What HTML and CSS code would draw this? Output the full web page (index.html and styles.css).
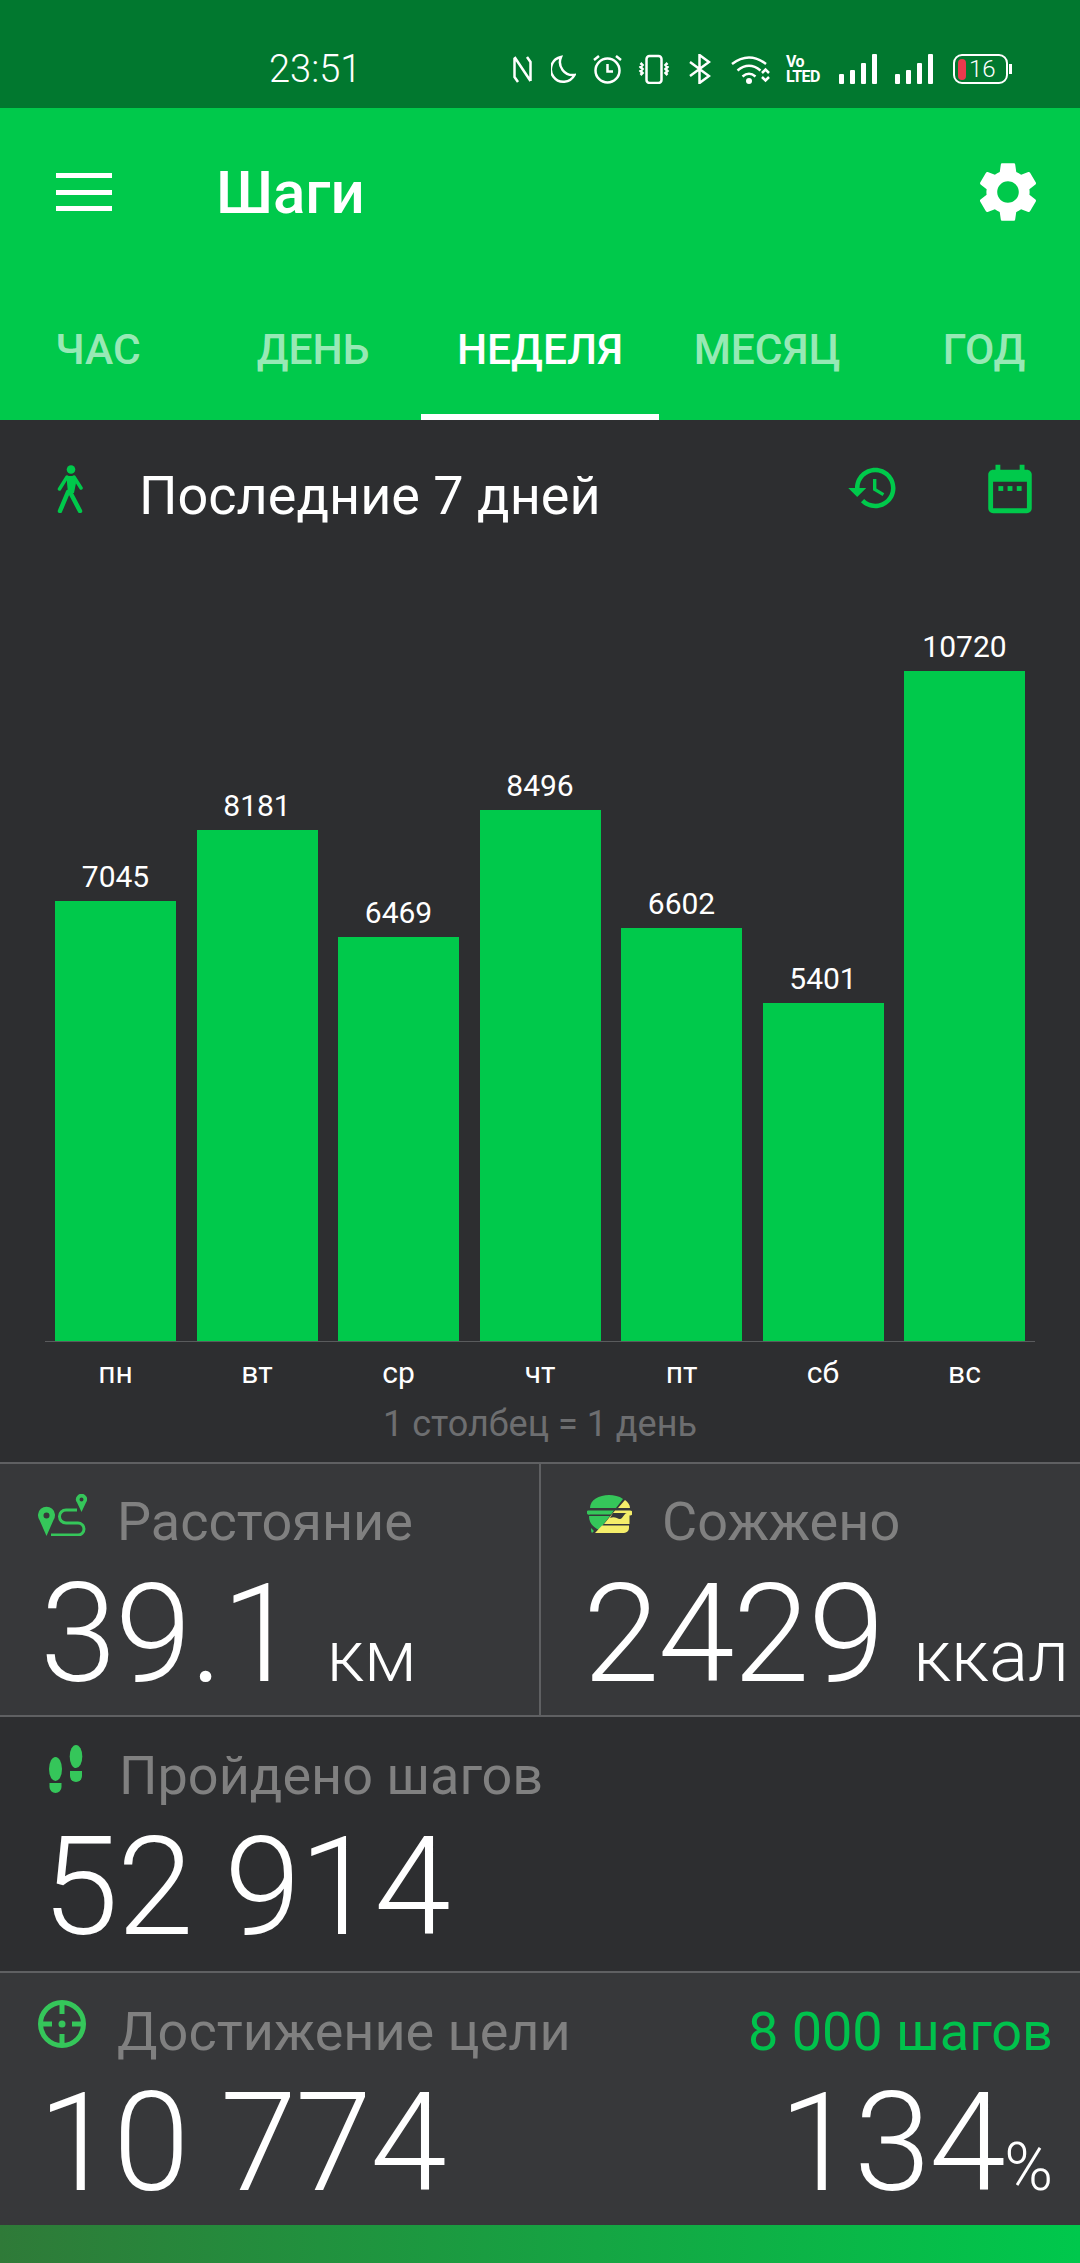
FILE: index.html
```html
<!DOCTYPE html>
<html lang="ru">
<head>
    <meta charset="UTF-8">
    <meta name="viewport" content="width=device-width, initial-scale=1.0">
    <title>Шаги</title>
    <link rel="stylesheet" href="styles.css">
</head>
<body>
    <!-- Status bar -->
    <div class="status-bar">
        <span class="clock">23:51</span>
        <div class="status-icons">
            <svg class="si" width="21" height="30" viewBox="0 0 21 30"><path d="M2.500 4v19l3.500 5M2.500 3l16 24M18.500 27V8L15 3"/></svg>
            <svg class="si si-moon" width="25" height="30" viewBox="0 0 25 30"><path d="M10 3A12.500 12.500 0 1 0 23.500 21A13 13 0 0 1 10 3Z"/></svg>
            <svg class="si si-alarm" width="31" height="30" viewBox="0 0 31 30"><circle cx="15.500" cy="16.500" r="12"/><path d="M15.500 10v7.500h5.500M2 6l5-4M29 6l-5-4"/></svg>
            <svg class="si si-vib" width="32" height="30" viewBox="0 0 32 30"><rect x="8.500" y="2" width="15" height="27" rx="3"/><path d="M2.500 9l2 2-2 2 2 2-2 2 2 2-2 2M29.500 9l-2 2 2 2-2 2 2 2-2 2 2 2"/></svg>
            <svg class="si si-bt" width="23" height="30" viewBox="0 0 23 30"><path d="M2 8l19 14-9.500 7V1L21 8 2 22"/></svg>
            <svg class="si si-wifi" width="40" height="30" viewBox="0 0 40 30"><path d="M1 10Q18-3 35 10M6.500 16.500Q18 7 29.500 16.500M11.500 22.500Q18 17 24.500 22.500M31 19l3.500-3.500 3.500 3.500M31 23l3.500 3.500 3.500-3.500"/><circle class="dot" cx="18" cy="27" r="3"/></svg>
            <div class="volte"><span>Vo</span><span>LTED</span></div>
            <svg class="signal" width="38" height="30" viewBox="0 0 38 30"><rect x="0" y="20" width="5" height="10" rx="1"/><rect x="11" y="16" width="5" height="14" rx="1"/><rect x="22" y="9" width="5" height="21" rx="1"/><rect x="33" y="0" width="5" height="30" rx="1"/></svg>
            <svg class="signal signal-second" width="38" height="30" viewBox="0 0 38 30"><rect x="0" y="20" width="5" height="10" rx="1"/><rect x="11" y="16" width="5" height="14" rx="1"/><rect x="22" y="9" width="5" height="21" rx="1"/><rect x="33" y="0" width="5" height="30" rx="1"/></svg>
            <div class="battery"><span class="battery-fill"></span><span class="battery-level">16</span></div>
        </div>
    </div>

    <!-- Green header with tabs -->
    <header>
        <div class="toolbar">
            <div class="menu-icon"><span></span><span></span><span></span></div>
            <h1>Шаги</h1>
            <svg class="gear" width="60" height="60" viewBox="2 2 20 20"><path d="M19.14 12.94c.04-.3.06-.61.06-.94 0-.32-.02-.64-.07-.94l2.03-1.58c.18-.14.23-.41.12-.61l-1.92-3.32c-.12-.22-.37-.29-.59-.22l-2.39.96c-.5-.38-1.03-.7-1.62-.94l-.36-2.54c-.04-.24-.24-.41-.48-.41h-3.84c-.24 0-.43.17-.47.41l-.36 2.54c-.59.24-1.13.57-1.62.94l-2.39-.96c-.22-.08-.47 0-.59.22L2.74 8.87c-.12.21-.08.47.12.61l2.03 1.58c-.05.3-.09.63-.09.94s.02.64.07.94l-2.03 1.58c-.18.14-.23.41-.12.61l1.92 3.32c.12.22.37.29.59.22l2.39-.96c.5.38 1.03.7 1.62.94l.36 2.54c.05.24.24.41.48.41h3.84c.24 0 .44-.17.47-.41l.36-2.54c.59-.24 1.13-.56 1.62-.94l2.39.96c.22.08.47 0 .59-.22l1.92-3.32c.12-.22.07-.47-.12-.61l-2.01-1.58zM12 15.6c-1.98 0-3.6-1.62-3.6-3.6s1.62-3.6 3.6-3.6 3.6 1.62 3.6 3.6-1.62 3.6-3.6 3.6z"/></svg>
        </div>
        <nav class="tabs">
            <div class="tab tab-first">ЧАС</div>
            <div class="tab">ДЕНЬ</div>
            <div class="tab active">НЕДЕЛЯ</div>
            <div class="tab tab-month">МЕСЯЦ</div>
            <div class="tab tab-last">ГОД</div>
        </nav>
    </header>

    <!-- Weekly chart -->
    <section class="chart-section">
        <div class="chart-head">
            <svg class="walker" width="26" height="48" viewBox="0 0 26 48">
                <circle cx="14" cy="4.500" r="4.300"/>
                <path class="walker-body" d="M9.500 11h8l1.500 7-2 10h-6l-1-10z"/>
                <path class="walker-limb" d="M10 12L2.500 24M17 12l7 11"/>
                <path class="walker-leg" d="M11 27L3 46M13 27l10 19"/>
            </svg>
            <h2>Последние 7 дней</h2>
            <svg class="head-icon history" width="54" height="54" viewBox="0 0 24 24"><path d="M13 3c-4.970 0-9 4.030-9 9H1l3.890 3.890.07.14L9 12H6c0-3.870 3.130-7 7-7s7 3.130 7 7-3.130 7-7 7c-1.930 0-3.680-.79-4.940-2.060l-1.420 1.420C8.270 19.990 10.510 21 13 21c4.970 0 9-4.030 9-9s-4.030-9-9-9zm-1 5v5l4.280 2.540.72-1.210-3.500-2.080V8H12z"/></svg>
            <svg class="head-icon calendar" width="58" height="58" viewBox="0 0 24 24"><path d="M19 4h-1V2h-2v2H8V2H6v2H5c-1.100 0-2 .9-2 2v14c0 1.100.9 2 2 2h14c1.100 0 2-.9 2-2V6c0-1.100-.9-2-2-2zm0 16H5V9h14v11z"/><rect x="7.200" y="10.800" width="2" height="2"/><rect x="11" y="10.800" width="2" height="2"/><rect x="14.800" y="10.800" width="2" height="2"/></svg>
        </div>
        <div class="chart">
            <div class="col"><span class="col-value">7045</span><div class="bar" style="height: 440px"></div></div>
            <div class="col"><span class="col-value">8181</span><div class="bar" style="height: 511px"></div></div>
            <div class="col"><span class="col-value">6469</span><div class="bar" style="height: 404px"></div></div>
            <div class="col"><span class="col-value">8496</span><div class="bar" style="height: 531px"></div></div>
            <div class="col"><span class="col-value">6602</span><div class="bar" style="height: 413px"></div></div>
            <div class="col"><span class="col-value">5401</span><div class="bar" style="height: 338px"></div></div>
            <div class="col"><span class="col-value">10720</span><div class="bar" style="height: 670px"></div></div>
        </div>
        <div class="days">
            <span>пн</span><span>вт</span><span>ср</span><span>чт</span><span>пт</span><span>сб</span><span>вс</span>
        </div>
        <div class="chart-note">1 столбец = 1 день</div>
    </section>

    <!-- Stats -->
    <section class="stats">
        <div class="stat-row light two-cols">
            <div class="stat stat-distance">
                <div class="stat-head">
                    <svg class="stat-icon" width="49" height="42" viewBox="0 0 49 42">
                        <path fill-rule="evenodd" d="M8.500 42L1.500 26A8.500 8.500 0 1 1 15.500 26ZM8.500 18.500a3 3 0 1 0 0 6 3 3 0 0 0 0-6Z"/>
                        <path fill-rule="evenodd" d="M43.500 18L39 8.500A5.500 5.500 0 1 1 48 8.500ZM43.500 3.500a2 2 0 1 0 0 4 2 2 0 0 0 0-4Z"/>
                        <path class="route" d="M39 16H28a6.500 6.500 0 0 0 0 13H40a6 6 0 0 1 0 12H13"/>
                    </svg>
                    <span class="stat-label">Расстояние</span>
                </div>
                <div class="stat-value">39.1<span class="unit unit-km">км</span></div>
            </div>
            <div class="stat stat-burned">
                <div class="stat-head">
                    <svg class="stat-icon" width="45" height="38" viewBox="0 0 45 38">
                        <path class="burger-green" d="M3 13C3 5 12 0 22 0c5 0 10 1 14 4l-7 9zM1 15.500h26l-3 4H3a2 2 0 0 1-2-4zM2 21h21L12 35C6 32 2 28 2 21zM4 33l3 3-2 2c-1-1-1-3-1-5z"/>
                        <path class="burger-yellow" d="M38 5c3 2 5 5 5 8H31zM28 15.500h15a2.500 2.500 0 0 1 0 5h-.5V29H17zM15 30.500h27V33a5 5 0 0 1-5 5H8z"/>
                        <path class="burger-cut" d="M26 18h14c-3 0-4 6-7 6s-5-3-10-1z"/>
                    </svg>
                    <span class="stat-label">Сожжено</span>
                </div>
                <div class="stat-value">2429<span class="unit unit-kcal">ккал</span></div>
            </div>
        </div>
        <div class="stat-row">
            <div class="stat stat-steps">
                <div class="stat-head">
                    <svg class="stat-icon" width="34" height="48" viewBox="0 0 34 48">
                        <ellipse cx="27" cy="11.500" rx="6.300" ry="11.500"/>
                        <path d="M21 26h12v5a6 6 0 0 1-12 0z"/>
                        <ellipse cx="6.500" cy="24" rx="6.500" ry="12"/>
                        <path d="M.5 38h12v4a6 6 0 0 1-12 0z"/>
                    </svg>
                    <span class="stat-label">Пройдено шагов</span>
                </div>
                <div class="stat-value">52 914</div>
            </div>
        </div>
        <div class="stat-row light">
            <div class="stat stat-goal">
                <div class="stat-head">
                    <svg class="stat-icon" width="48" height="48" viewBox="0 0 48 48">
                        <circle class="target" cx="24" cy="24" r="21.500"/>
                        <path class="target" d="M24 3v11M24 34v11M3 24h11M34 24h11"/>
                        <circle cx="24" cy="24" r="3.500"/>
                    </svg>
                    <span class="stat-label">Достижение цели</span>
                    <span class="stat-goal-target">8 000 шагов</span>
                </div>
                <div class="stat-value goal-values"><span>10 774</span><span class="goal-percent">134<small>%</small></span></div>
            </div>
        </div>
    </section>

    <div class="bottom-strip"></div>
</body>
</html>
```

FILE: styles.css
```css
* {
    box-sizing: border-box;
}

body {
    margin: 0;
    width: 1080px;
    height: 2263px;
    overflow: hidden;
    font-family: Roboto, "Noto Sans", sans-serif;
    background-color: #2d2e30;
    color: #fff;
}

/* Status bar */
.status-bar {
    height: 108px;
    padding: 54px 72px 0 269px;
    background-color: #01782f;
    display: flex;
    justify-content: space-between;
    align-items: flex-start;
}

.clock {
    font-size: 38px;
    font-weight: 300;
    line-height: 30px;
}

.status-icons {
    display: flex;
    align-items: flex-start;
    gap: 16px;
}

.si {
    fill: none;
    stroke: #fff;
    stroke-width: 2.5;
}

.si .dot {
    fill: #fff;
    stroke: none;
}

.si-moon,
.si-bt {
    margin-left: 2px;
}

.si-vib {
    margin-left: -1px;
}

.si-wifi {
    margin-left: 4px;
}

.volte {
    width: 36px;
    height: 30px;
    margin-left: -1px;
    display: flex;
    flex-direction: column;
    font-size: 16px;
    font-weight: 700;
    line-height: 15px;
    letter-spacing: -0.6px;
}

.signal {
    fill: #fff;
    margin-left: 1px;
}

.signal-second {
    margin-left: 2px;
}

.battery {
    position: relative;
    width: 55px;
    height: 30px;
    margin-left: 4px;
    border: 2.5px solid #fff;
    border-radius: 9px;
    display: flex;
    align-items: center;
    padding-left: 3px;
    gap: 3px;
}

.battery::after {
    content: '';
    position: absolute;
    right: -6px;
    top: 8px;
    width: 3px;
    height: 10px;
    background-color: #fff;
}

.battery-fill {
    width: 8px;
    height: 21px;
    border-radius: 4px;
    background-color: #ea3a4d;
}

.battery-level {
    font-size: 24px;
    font-weight: 300;
    line-height: 24px;
}

/* Header */
header {
    height: 312px;
    background-color: #00c94b;
    display: flex;
    flex-direction: column;
}

.toolbar {
    height: 168px;
    padding: 0 42px 0 56px;
    display: flex;
    align-items: center;
}

.menu-icon {
    width: 56px;
    height: 38px;
    margin-right: 107px;
    display: flex;
    flex-direction: column;
    justify-content: space-between;
}

.menu-icon span {
    height: 5px;
    background-color: #fff;
}

h1 {
    margin: 0 0 0 -3px;
    padding-top: 2px;
    font-size: 60px;
    font-weight: 500;
    line-height: 60px;
}

.gear {
    margin-left: auto;
    fill: #fff;
}

.tabs {
    flex: 1;
    display: grid;
    grid-template-columns: 205px 216px 238px 218px 203px;
}

.tab {
    padding-top: 51px;
    text-align: center;
    font-size: 42.5px;
    font-weight: 500;
    line-height: 46px;
    white-space: nowrap;
    color: rgba(255, 255, 255, 0.62);
}

.tab-first {
    padding-right: 9px;
}

.tab-month {
    padding-right: 2px;
}

.tab-last {
    padding-left: 11px;
}

.tab.active {
    color: #fff;
    border-bottom: 6px solid #fff;
}

/* Chart */
.chart-section {
    height: 1042px;
    display: flex;
    flex-direction: column;
}

.chart-head {
    height: 150px;
    padding: 24px 0 0 57px;
    display: flex;
    align-items: flex-start;
}

.walker {
    margin-top: 21px;
    fill: #00c94b;
}

.walker-body {
    fill: #00c94b;
}

.walker-limb {
    fill: none;
    stroke: #00c94b;
    stroke-width: 3.5;
    stroke-linecap: round;
}

.walker-leg {
    fill: none;
    stroke: #00c94b;
    stroke-width: 4.5;
    stroke-linecap: round;
}

h2 {
    margin: 21px 0 0 56px;
    font-size: 54px;
    font-weight: 400;
    line-height: 62px;
    white-space: nowrap;
}

.head-icon {
    fill: #00c94b;
}

.history {
    margin: 17px 0 0 245px;
}

.calendar {
    margin: 16px 0 0 81px;
}

.chart {
    height: 772px;
    margin: 0 45px;
    padding: 0 10px;
    border-bottom: 1px solid #5a5b5d;
    display: flex;
    justify-content: space-between;
    align-items: flex-end;
}

.col {
    width: 121px;
    display: flex;
    flex-direction: column;
    align-items: center;
}

.col-value {
    font-size: 30px;
    line-height: 36px;
    margin-bottom: 6px;
}

.bar {
    width: 100%;
    background-color: #00c94b;
}

.days {
    margin: 13px 45px 0;
    padding: 0 10px;
    display: flex;
    justify-content: space-between;
}

.days span {
    width: 121px;
    text-align: center;
    font-size: 30px;
    line-height: 36px;
}

.chart-note {
    margin-top: 13px;
    text-align: center;
    font-size: 36px;
    line-height: 40px;
    color: #6d6e70;
}

/* Stats */
.stat-row {
    height: 256px;
    border-top: 2px solid #5f6062;
    display: flex;
}

.stat-row.light {
    background-color: #37383a;
    height: 254px;
}

.stat-row.two-cols {
    height: 253px;
}

.stat {
    flex: 1;
    position: relative;
    padding-top: 26px;
}

.stat-head {
    height: 62px;
    display: flex;
    align-items: flex-start;
}

.stat-icon {
    fill: #35c65a;
    flex: none;
}

.stat-label {
    margin-top: 3px;
    font-size: 54px;
    line-height: 60px;
    color: #808080;
    white-space: nowrap;
}

.two-cols .stat-label {
    margin-top: 2px;
}

.stat-value {
    margin-top: 12px;
    font-size: 138px;
    font-weight: 300;
    line-height: 140px;
    letter-spacing: -1.5px;
    white-space: nowrap;
}

.unit {
    font-size: 72px;
    letter-spacing: 0;
}

/* Per card offsets */
.stat-distance {
    flex: none;
    width: 541px;
    padding-left: 38px;
    border-right: 2px solid #5f6062;
}

.stat-distance .stat-icon {
    margin: 4px 30px 0 0;
}

.stat-distance .stat-value {
    margin-left: 2px;
}

.unit-km {
    margin-left: 30px;
}

.stat-burned {
    padding-left: 46px;
}

.stat-burned .stat-icon {
    margin: 5px 30px 0 0;
}

.stat-burned .stat-value {
    margin-left: -4px;
}

.unit-kcal {
    margin-left: 30px;
    font-size: 73px;
}

.route {
    fill: none;
    stroke: #35c65a;
    stroke-width: 3;
}

.burger-green {
    fill: #35c65a;
}

.burger-yellow {
    fill: #f5ee6a;
}

.burger-cut {
    fill: #37383a;
}

.stat-steps {
    padding-left: 49px;
}

.stat-steps .stat-icon {
    margin: 2px 36px 0 0;
}

.stat-steps .stat-value {
    margin-left: -7px;
}

.stat-goal {
    padding-left: 38px;
    padding-right: 27px;
}

.stat-goal .stat-icon {
    margin: 1px 31px 0 0;
}

.target {
    fill: none;
    stroke: #35c65a;
    stroke-width: 5;
}

.stat-goal-target {
    margin-left: auto;
    margin-top: 3px;
    font-size: 54px;
    line-height: 60px;
    color: #00c24c;
    white-space: nowrap;
}

.goal-values {
    display: flex;
    justify-content: space-between;
}

.goal-percent small {
    font-size: 66px;
    letter-spacing: 0;
}

.bottom-strip {
    height: 38px;
    background: linear-gradient(90deg, #2f7a38, #00c84c);
}
```
